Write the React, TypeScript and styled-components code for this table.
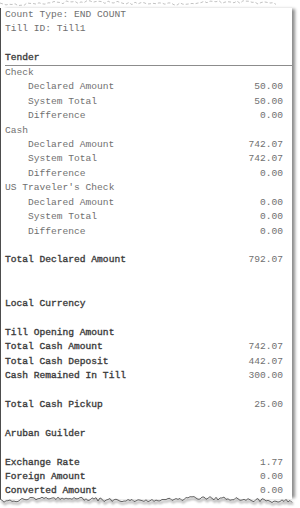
import styled, { createGlobalStyle } from "styled-components";

const GlobalStyle = createGlobalStyle`
  body {
    margin: 0;
    background: #fff;
  }
`;

const Page = styled.div`
  width: 300px;
  height: 508px;
  overflow: hidden;
  background: #fff;
`;

const Sheet = styled.div`
  width: 292px;
  display: flex;
  flex-direction: column;
`;

const Body = styled.div`
  border-left: 1px solid #4d4d4d;
  padding: 0 9px 0 4px;
  box-shadow: 4px 0 3px -1px rgba(0, 0, 0, 0.45);
  font-family: "Courier New", "Liberation Mono", monospace;
  font-size: 9.6px;
  line-height: 14.45px;
  color: #707070;
  background: #fff;
`;

const Row = styled.div<{ $indent?: boolean; $rule?: boolean }>`
  display: flex;
  justify-content: space-between;
  box-sizing: border-box;
  height: 14.45px;
  white-space: pre;
  padding-left: ${p => (p.$indent ? "23px" : "0")};
  ${p => p.$rule && `
    margin-right: -9px;
    padding-right: 9px;
    border-bottom: 1px solid #8c8c8c;
  `}
`;

// Courier's bold is only a little heavier than its regular, so thicken the stroke instead
const Label = styled.span<{ $bold?: boolean }>`
  color: ${p => (p.$bold ? "#3c3c3c" : "#707070")};
  -webkit-text-stroke: ${p => (p.$bold ? "0.35px #3c3c3c" : "0")};
`;

const Value = styled.span`
  color: #707070;
`;

const Blank = styled.div<{ $lines: number }>`
  height: ${p => p.$lines * 14.45}px;
`;

const TopEdge = styled.svg`
  display: block;
  width: 292px;
  height: 8px;
`;

const BottomEdge = styled.svg`
  display: block;
  width: 300px;
  height: 16px;
  margin-top: -6px;
`;

type Line =
  | { label: string; value?: string; indent?: boolean; bold?: boolean; rule?: boolean }
  | { blank: number };

const lines: Line[] = [
  { label: "Count Type: END COUNT" },
  { label: "Till ID: Till1" },
  { blank: 1 },
  { label: "Tender", bold: true, rule: true },
  { label: "Check" },
  { label: "Declared Amount", value: "50.00", indent: true },
  { label: "System Total", value: "50.00", indent: true },
  { label: "Difference", value: "0.00", indent: true },
  { label: "Cash" },
  { label: "Declared Amount", value: "742.07", indent: true },
  { label: "System Total", value: "742.07", indent: true },
  { label: "Difference", value: "0.00", indent: true },
  { label: "US Traveler's Check" },
  { label: "Declared Amount", value: "0.00", indent: true },
  { label: "System Total", value: "0.00", indent: true },
  { label: "Difference", value: "0.00", indent: true },
  { blank: 1 },
  { label: "Total Declared Amount", value: "792.07", bold: true },
  { blank: 2 },
  { label: "Local Currency", bold: true },
  { blank: 1 },
  { label: "Till Opening Amount", bold: true },
  { label: "Total Cash Amount", value: "742.07", bold: true },
  { label: "Total Cash Deposit", value: "442.07", bold: true },
  { label: "Cash Remained In Till", value: "300.00", bold: true },
  { blank: 1 },
  { label: "Total Cash Pickup", value: "25.00", bold: true },
  { blank: 1 },
  { label: "Aruban Guilder", bold: true },
  { blank: 1 },
  { label: "Exchange Rate", value: "1.77", bold: true },
  { label: "Foreign Amount", value: "0.00", bold: true },
  { label: "Converted Amount", value: "0.00", bold: true },
];

// cheap repeatable noise for the torn edges
const noise = (i: number, seed: number) => {
  const s = Math.sin(i * 12.9898 + seed * 78.233) * 43758.5453;
  return s - Math.floor(s);
};

const tornPath = (width: number, step: number, base: number, amp: number, seed: number) => {
  const pts: string[] = [];
  for (let x = 0; x <= width; x += step) {
    const y = base + (noise(x, seed) - 0.5) * amp + Math.sin(x / 23 + seed) * amp * 0.4;
    pts.push(`${x === 0 ? "M" : "L"}${x} ${y.toFixed(2)}`);
  }
  return pts.join(" ");
};

function App() {
  const top = tornPath(276, 3, 3, 3, 1);
  const bottom = tornPath(292, 2, 6.5, 3.5, 2);

  return (
    <Page>
      <GlobalStyle />
      <Sheet>
        <TopEdge viewBox="0 0 292 8">
          <path d={top} fill="none" stroke="#a8a8a8" strokeWidth="0.7" strokeDasharray="3 2" />
        </TopEdge>
        <Body>
          {lines.map((l, i) =>
            "blank" in l ? (
              <Blank key={i} $lines={l.blank} />
            ) : (
              <Row key={i} $indent={l.indent} $rule={l.rule}>
                <Label $bold={l.bold}>{l.label}</Label>
                {l.value && <Value>{l.value}</Value>}
              </Row>
            )
          )}
        </Body>
        <BottomEdge viewBox="0 0 300 16">
          <defs>
            <filter id="soft" x="-5%" y="-50%" width="110%" height="200%">
              <feGaussianBlur stdDeviation="1.2" />
            </filter>
          </defs>
          <path d={bottom} transform="translate(1 2)" fill="none" stroke="#b5b5b5" strokeWidth="2" filter="url(#soft)" />
          <path d={bottom} fill="none" stroke="#555" strokeWidth="0.9" />
        </BottomEdge>
      </Sheet>
    </Page>
  );
}

export default App;
